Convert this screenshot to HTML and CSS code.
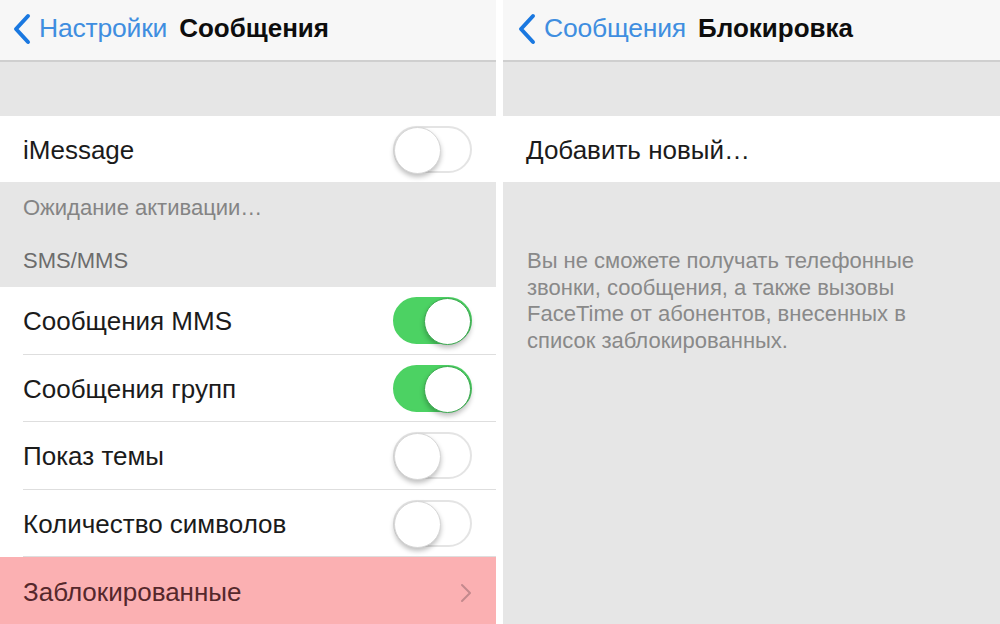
FILE: index.html
```html
<!DOCTYPE html>
<html lang="ru">
<head>
<meta charset="utf-8">
<title>Сообщения — Блокировка</title>
<link rel="stylesheet" href="styles.css">
</head>
<body>
  <section class="panel panel-left">
    <header class="navbar">
      <svg class="back-chevron" viewBox="0 0 20 32" width="20" height="32"><path d="M16 3 L4 16 L16 29" fill="none" stroke="#1a78e0" stroke-width="4" stroke-linecap="round" stroke-linejoin="round"/></svg>
      <span class="back-label">Настройки</span>
      <span class="nav-title">Сообщения</span>
    </header>
    <div class="spacer"></div>
    <div class="group">
      <div class="cell">
        <span class="cell-label">iMessage</span>
        <span class="toggle"></span>
      </div>
    </div>
    <div class="section-info">
      <div class="section-note">Ожидание активации…</div>
      <div class="section-head">SMS/MMS</div>
    </div>
    <div class="group">
      <div class="cell cell-sep">
        <span class="cell-label">Сообщения MMS</span>
        <span class="toggle on"></span>
      </div>
      <div class="cell cell-sep">
        <span class="cell-label">Сообщения групп</span>
        <span class="toggle on"></span>
      </div>
      <div class="cell cell-sep">
        <span class="cell-label">Показ темы</span>
        <span class="toggle"></span>
      </div>
      <div class="cell cell-sep">
        <span class="cell-label">Количество символов</span>
        <span class="toggle"></span>
      </div>
      <div class="cell cell-highlight">
        <span class="cell-label">Заблокированные</span>
        <svg class="disclosure" viewBox="0 0 12 20" width="12" height="20"><path d="M2 2 L10 10 L2 18" fill="none" stroke="#c3898d" stroke-width="2" stroke-linecap="round" stroke-linejoin="round"/></svg>
      </div>
    </div>
  </section>

  <section class="panel panel-right">
    <header class="navbar">
      <svg class="back-chevron" viewBox="0 0 20 32" width="20" height="32"><path d="M16 3 L4 16 L16 29" fill="none" stroke="#1a78e0" stroke-width="4" stroke-linecap="round" stroke-linejoin="round"/></svg>
      <span class="back-label">Сообщения</span>
      <span class="nav-title">Блокировка</span>
    </header>
    <div class="spacer"></div>
    <div class="group">
      <div class="cell">
        <span class="cell-label">Добавить новый…</span>
      </div>
    </div>
    <p class="footer-note">Вы не сможете получать телефонные звонки, сообщения, а также вызовы FaceTime от абонентов, внесенных в список заблокированных.</p>
  </section>
</body>
</html>
```

FILE: styles.css
```css
* { box-sizing: border-box; }

html, body {
  margin: 0;
  padding: 0;
  height: 100%;
}

body {
  width: 1000px;
  height: 624px;
  overflow: hidden;
  display: flex;
  gap: 7px;
  background: #ffffff;
  font-family: "Liberation Sans", Arial, Helvetica, sans-serif;
  color: #1b1b1b;
}

.panel {
  display: flex;
  flex-direction: column;
  background: #e6e6e6;
  height: 624px;
}

.panel-left { width: 496px; }
.panel-right { flex: 1; }

.navbar {
  height: 62px;
  flex: none;
  background: #f7f7f7;
  border-bottom: 2px solid #cfcfcf;
  display: flex;
  align-items: center;
  padding-left: 12px;
  padding-bottom: 4px;
}

.panel-right .navbar { padding-left: 14px; }

.back-chevron {
  flex: none;
  margin-right: 7px;
  margin-top: 2px;
}

.back-label {
  font-size: 26.5px;
  color: #3f8ee0;
  letter-spacing: -0.2px;
  margin-right: 12px;
}

.nav-title {
  font-size: 26px;
  font-weight: bold;
  color: #0d0d0d;
}

.spacer {
  height: 54px;
  flex: none;
}

.group {
  background: #ffffff;
  flex: none;
}

.cell {
  height: 66px;
  display: flex;
  align-items: center;
  justify-content: space-between;
  padding: 0 24px 0 23px;
  position: relative;
}

.cell-sep {
  height: 67.5px;
}

.cell-sep::after {
  content: "";
  position: absolute;
  left: 23px;
  right: 0;
  bottom: 0;
  height: 1px;
  background: #dedede;
}

.cell-label {
  font-size: 26px;
  color: #1b1b1b;
  margin-top: 2px;
}

.cell-highlight {
  background: #fbb0b2;
  height: 67px;
}

.cell-highlight .cell-label {
  color: #55282c;
  margin-top: 4px;
}

.cell-highlight .disclosure {
  margin-top: 4px;
}

.section-info {
  height: 105px;
  flex: none;
  padding: 0 23px;
}

.section-note {
  font-size: 22px;
  color: #848484;
  padding-top: 13px;
  height: 54px;
}

.section-head {
  font-size: 22px;
  color: #6c6c6c;
  padding-top: 12px;
}

.toggle {
  flex: none;
  width: 79px;
  height: 47px;
  border-radius: 24px;
  border: 2px solid #e4e4e4;
  background: #ffffff;
  position: relative;
}

.toggle::after {
  content: "";
  position: absolute;
  top: -1px;
  left: -1px;
  width: 45px;
  height: 45px;
  border-radius: 50%;
  background: #ffffff;
  border: 1px solid #d6d6d6;
  box-shadow: 0 3px 5px rgba(0, 0, 0, 0.25);
}

.toggle.on {
  background: #4cd263;
  border-color: #4cd263;
}

.toggle.on::after {
  left: auto;
  right: -1px;
  border-color: #3aa84e;
}

.footer-note {
  margin: 0;
  padding: 66px 73px 0 24px;
  font-size: 22px;
  line-height: 26.5px;
  color: #898989;
}
```
